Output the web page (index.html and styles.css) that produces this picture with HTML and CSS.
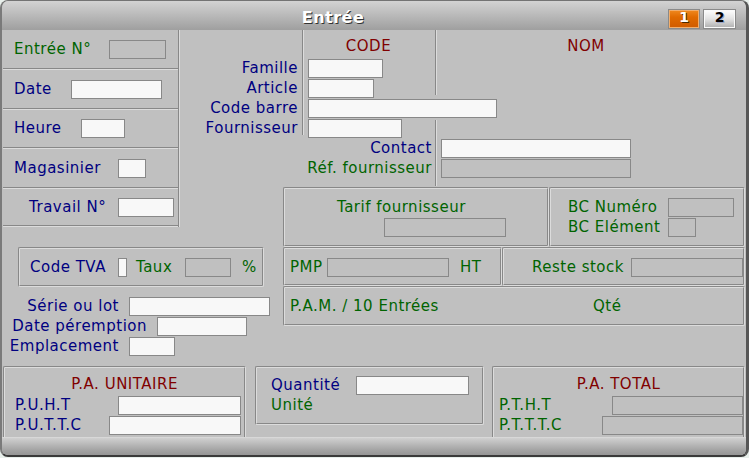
FILE: index.html
```html
<!DOCTYPE html>
<html lang="fr">
<head>
<meta charset="utf-8">
<title>Entrée</title>
<link rel="stylesheet" href="styles.css">
</head>
<body>
<div class="window">
  <div class="titlebar">
    <div class="title">Entrée</div>
    <div class="pages"><span class="pg pg-on">1</span><span class="pg pg-off">2</span></div>
  </div>

  <div class="main">
    <div class="leftstack">
      <div class="cell h38"><span class="lb g w95">Entrée N°</span><span class="fld off w57"></span></div>
      <div class="cell h40"><span class="lb n w57">Date</span><span class="fld w91"></span></div>
      <div class="cell h39"><span class="lb n w67">Heure</span><span class="fld w44"></span></div>
      <div class="cell h40"><span class="lb n w104">Magasinier</span><span class="fld w28"></span></div>
      <div class="cell h40 pl26"><span class="lb n w89">Travail N°</span><span class="fld w56"></span></div>
    </div>

    <div class="toparea">
      <div class="vline vl1"></div>
      <div class="vline vl2"></div>
      <div class="vline vl3"></div>
      <div class="hdr hdr-code">CODE</div>
      <div class="hdr hdr-nom">NOM</div>

      <div class="tl n row2">Famille</div>
      <span class="fld tf row2 w75"></span>
      <div class="tl n row3">Article</div>
      <span class="fld tf row3 w66"></span>
      <div class="tl n row4">Code barre</div>
      <span class="fld tf tf-wide row4 w189"></span>
      <div class="tl n row5">Fournisseur</div>
      <span class="fld tf row5 w94"></span>

      <div class="tl tl-wide n row6">Contact</div>
      <span class="fld tf tf3 row6 w190"></span>
      <div class="tl tl-wide g row7">Réf. fournisseur</div>
      <span class="fld off tf tf3 row7 w190"></span>
    </div>

    <div class="rpanels">
      <div class="prow">
        <div class="panel tarif">
          <span class="tarif-t g">Tarif fournisseur</span>
          <span class="fld off w122"></span>
        </div>
        <div class="panel bc">
          <div class="frow"><span class="lb g w100">BC Numéro</span><span class="fld off w66"></span></div>
          <div class="frow"><span class="lb g w100">BC Elément</span><span class="fld off w28"></span></div>
        </div>
      </div>
      <div class="prow">
        <div class="panel pmp">
          <span class="lb g w37">PMP</span><span class="fld off w122"></span><span class="lb g ht">HT</span>
        </div>
        <div class="panel reste">
          <span class="lb g w99">Reste stock</span><span class="fld off w112"></span>
        </div>
      </div>
      <div class="panel pam">
        <span class="lb g w303">P.A.M. / 10 Entrées</span><span class="lb g">Qté</span>
      </div>
    </div>

    <div class="lowerleft">
      <div class="panel tva">
        <span class="lb n w88">Code TVA</span><span class="fld w9"></span>
        <span class="lb g w49 ml9">Taux</span><span class="fld off w46"></span>
        <span class="lb g ml11">%</span>
      </div>
      <div class="lrows">
        <div class="lrow"><span class="lb n right w116">Série ou lot</span><span class="fld w141"></span></div>
        <div class="lrow"><span class="lb n right w144">Date péremption</span><span class="fld w90"></span></div>
        <div class="lrow"><span class="lb n right w116">Emplacement</span><span class="fld w46"></span></div>
      </div>
    </div>
  </div>

  <div class="bottomrow">
    <div class="panel pau">
      <div class="ptitle">P.A. UNITAIRE</div>
      <div class="frow"><span class="lb n grow">P.U.H.T</span><span class="fld w123"></span></div>
      <div class="frow"><span class="lb n grow">P.U.T.T.C</span><span class="fld w132"></span></div>
    </div>
    <div class="panel qty">
      <div class="frow"><span class="lb n w85">Quantité</span><span class="fld w113"></span></div>
      <div class="frow"><span class="lb g">Unité</span></div>
    </div>
    <div class="panel pat">
      <div class="ptitle">P.A. TOTAL</div>
      <div class="frow"><span class="lb g grow">P.T.H.T</span><span class="fld off w131"></span></div>
      <div class="frow"><span class="lb g grow">P.T.T.T.C</span><span class="fld off w141"></span></div>
    </div>
  </div>

  <div class="status"></div>
</div>
</body>
</html>
```

FILE: styles.css
```css
* { box-sizing: border-box; }
html, body { margin: 0; padding: 0; background: #e8efeb; }
body {
  font-family: "DejaVu Sans", Verdana, sans-serif;
  font-size: 15px;
  letter-spacing: 0.5px;
}

.window {
  width: 749px;
  height: 457px;
  display: flex;
  flex-direction: column;
  background: #c0c0c0;
  border-style: solid;
  border-color: #747474 #565656 #3a3a3a #7a7a7a;
  border-width: 1px 3px 2px 2px;
  border-radius: 8px;
  overflow: hidden;
}

/* title bar */
.titlebar {
  flex: none;
  height: 29px;
  display: flex;
  background: linear-gradient(#d3d3d3, #9f9f9f);
}
.title {
  flex: 1;
  text-align: center;
  color: #fff;
  font-weight: bold;
  font-size: 16px;
  letter-spacing: 0.5px;
  line-height: 25px;
  padding-top: 4px;
  text-shadow: 1px 1px 0 #333;
}
.pages {
  flex: none;
  width: 82px;
  display: flex;
  gap: 3px;
  padding: 8px 0 0 4px;
}
.pg {
  width: 32px;
  height: 20px;
  border: 1px solid #8a8a8a;
  font-weight: bold;
  font-size: 14px;
  line-height: 15px;
  text-align: center;
  letter-spacing: 0;
}
.pg-on {
  background: linear-gradient(#f08a20, #e06a00 40%, #cf5b00);
  color: #fff;
  text-shadow: 1px 1px 0 #4a2a00;
  box-shadow: inset 0 0 0 1px #f2ae6c;
}
.pg-off {
  width: 33px;
  background: linear-gradient(#ffffff, #e2e2e2 50%, #aeaeae);
  color: #000;
  text-shadow: 1px 1px 0 #9aa6c8;
  box-shadow: inset 0 0 0 1px #fafafa;
}

/* colours */
.n { color: #000080; }
.g { color: #006400; }

/* generic pieces */
.lb { flex: none; line-height: 19px; white-space: nowrap; }
.right { text-align: right; }
.grow { flex: 1; }
.fld {
  display: block;
  flex: none;
  height: 19px;
  background: #f8f8f8;
  border: 1px solid #888;
}
.fld.off { background: #c0c0c0; }
.panel { border: 2px groove #dcdcdc; border-radius: 2px; }
.frow { display: flex; align-items: flex-start; height: 20px; }

/* widths */
.w9 { width: 9px; } .w28 { width: 28px; } .w37 { width: 37px; } .w44 { width: 44px; }
.w46 { width: 46px; } .w49 { width: 49px; } .w56 { width: 56px; } .w57 { width: 57px; }
.w66 { width: 66px; } .w67 { width: 67px; } .w75 { width: 75px; } .w85 { width: 85px; }
.w88 { width: 88px; } .w89 { width: 89px; } .w90 { width: 90px; } .w91 { width: 91px; }
.w94 { width: 94px; } .w95 { width: 95px; } .w99 { width: 99px; } .w100 { width: 100px; }
.w104 { width: 104px; } .w112 { width: 112px; } .w113 { width: 113px; } .w116 { width: 116px; }
.w122 { width: 122px; } .w123 { width: 123px; } .w131 { width: 131px; } .w132 { width: 132px; }
.w141 { width: 141px; } .w144 { width: 144px; } .w189 { width: 189px; } .w190 { width: 190px; }
.w303 { width: 303px; }
.ml9 { margin-left: 9px; } .ml11 { margin-left: 11px; }

/* main grid */
.main {
  flex: none;
  height: 336px;
  display: grid;
  grid-template-columns: 177px 103px 462px;
  grid-template-rows: 156px 41px 139px;
  padding: 0 1px;
}

/* left stack */
.leftstack {
  grid-column: 1;
  grid-row: 1 / 3;
  display: flex;
  flex-direction: column;
  border-right: 2px groove #dcdcdc;
}
.cell {
  flex: none;
  display: flex;
  align-items: center;
  padding-left: 11px;
  border-top: 2px groove #dcdcdc;
}
.cell:first-child { border-top: 0; }
.cell:last-child { border-bottom: 2px groove #dcdcdc; }
.h38 { height: 38px; } .h39 { height: 39px; } .h40 { height: 40px; }
.pl26 { padding-left: 26px; }

/* code / nom area */
.toparea {
  grid-column: 2 / 4;
  grid-row: 1;
  display: grid;
  grid-template-columns: 122px 133px 310px;
  grid-template-rows: 29px repeat(6, 20px) 7px;
}
.vline { border-left: 2px groove #dcdcdc; }
.vl1 { grid-column: 2; grid-row: 1 / 6; margin-bottom: 4px; }
.vl2 { grid-column: 3; grid-row: 1 / 4; margin-bottom: 4px; }
.vl3 { grid-column: 3; grid-row: 5 / 9; margin-top: 1px; }
.hdr { grid-row: 1; text-align: center; color: #800000; line-height: 18px; padding-top: 7px; }
.hdr-code { grid-column: 2; }
.hdr-nom { grid-column: 3; padding-right: 8px; }
.tl {
  grid-column: 1;
  text-align: right;
  padding-right: 4px;
  line-height: 19px;
  white-space: nowrap;
  align-self: start;
}
.tl-wide { grid-column: 1 / 3; padding-right: 3px; }
.tf { grid-column: 2; margin-left: 6px; justify-self: start; align-self: start; }
.tf-wide { grid-column: 2 / 4; }
.tf3 { grid-column: 3; }
.row2 { grid-row: 2; } .row3 { grid-row: 3; } .row4 { grid-row: 4; }
.row5 { grid-row: 5; } .row6 { grid-row: 6; } .row7 { grid-row: 7; }

/* right panels */
.rpanels {
  grid-column: 3;
  grid-row: 2 / 4;
  display: flex;
  flex-direction: column;
  padding-top: 1px;
}
.prow { display: flex; flex: none; }
.tarif {
  width: 266px;
  height: 60px;
  padding-top: 9px;
  display: flex;
  flex-direction: column;
  align-items: flex-start;
}
.tarif-t { margin-left: 52px; line-height: 18px; white-space: nowrap; }
.tarif .fld { margin-left: 99px; margin-top: 2px; }
.bc { flex: 1; height: 60px; padding: 9px 0 0 17px; }
.pmp {
  width: 219px;
  height: 39px;
  display: flex;
  align-items: center;
  padding: 2px 0 0 5px;
}
.ht { margin-left: 11px; }
.reste {
  flex: 1;
  height: 39px;
  display: flex;
  align-items: center;
  padding: 2px 0 0 28px;
}
.pam {
  flex: none;
  height: 40px;
  display: flex;
  align-items: center;
  padding-left: 5px;
}

/* lower left */
.lowerleft {
  grid-column: 1 / 3;
  grid-row: 3;
  padding-top: 20px;
  display: flex;
  flex-direction: column;
  align-items: flex-start;
}
.tva {
  margin-left: 15px;
  width: 246px;
  height: 40px;
  display: flex;
  align-items: center;
  padding: 1px 0 0 10px;
}
.lrows { margin-top: 10px; }
.lrow { display: flex; align-items: flex-start; height: 20px; }
.lrow .lb { margin-right: 10px; }

/* bottom row */
.bottomrow {
  flex: none;
  height: 71px;
  display: flex;
  padding: 0 1px;
}
.pau {
  width: 243px;
  border-bottom: 0;
  border-radius: 2px 2px 0 0;
  padding-top: 7px;
}
.pau .frow { padding: 0 3px 0 10px; }
.qty {
  width: 229px;
  height: 59px;
  margin-left: 9px;
  padding: 8px 0 0 14px;
}
.pat {
  width: 253px;
  margin-left: 8px;
  border-bottom: 0;
  border-radius: 2px 2px 0 0;
  padding-top: 7px;
}
.pat .frow { padding-left: 5px; }
.ptitle { text-align: center; color: #800000; line-height: 18px; margin-bottom: 3px; }

.status {
  flex: none;
  height: 18px;
  background: linear-gradient(#d0d0d0, #a4a4a4 70%, #969696);
  border-top: 1px solid #d8d8d8;
}
```
